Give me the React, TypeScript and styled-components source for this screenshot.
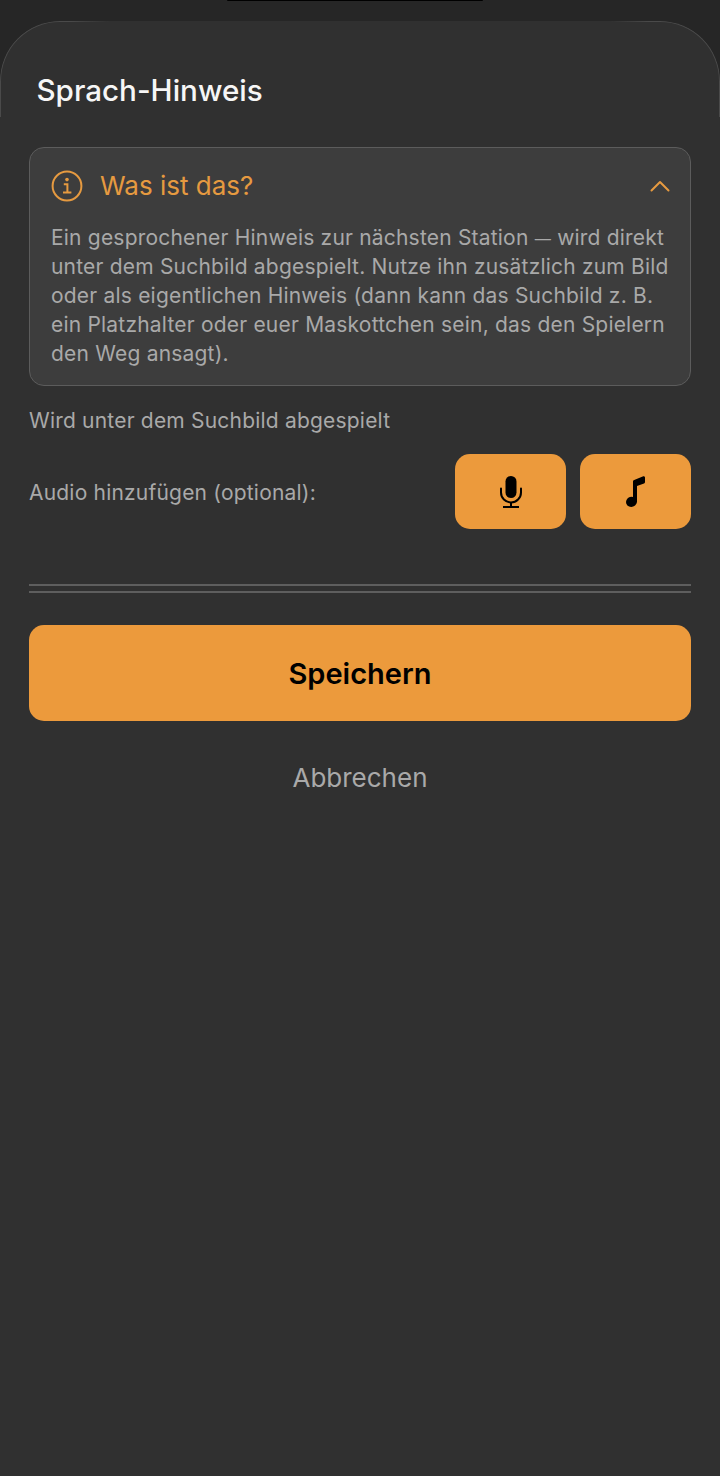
import React from "react";
import styled, { createGlobalStyle } from "styled-components";

const Global = createGlobalStyle`
  html, body { margin: 0; padding: 0; background: #252525; }
  * { box-sizing: border-box; }
  body { font-family: Inter, "Liberation Sans", sans-serif; }
`;

const Screen = styled.div`
  width: 720px;
  height: 1476px;
  overflow: hidden;
  background: #262626;
  display: flex;
  flex-direction: column;
  align-items: center;
`;

const Notch = styled.div`
  width: 256px;
  height: 1px;
  margin-right: 10px;
  flex: none;
  background: #000;
  border-radius: 0 0 4px 4px;
`;

const Sheet = styled.main`
  position: relative;
  width: 720px;
  flex: 1;
  margin-top: 20px;
  padding: 49px 29px 0;
  background: #303030;
  border-radius: 60px 60px 0 0;

  &::before {
    content: "";
    position: absolute;
    inset: 0 0 auto 0;
    height: 95px;
    border: 1px solid #4a4a4a;
    border-bottom: 0;
    border-radius: 60px 60px 0 0;
    pointer-events: none;
    -webkit-mask-image: linear-gradient(90deg, #000 0, #000 70px, transparent 110px, transparent 610px, #000 650px, #000 100%);
    mask-image: linear-gradient(90deg, #000 0, #000 70px, transparent 110px, transparent 610px, #000 650px, #000 100%);
  }
`;

const Title = styled.h1`
  margin: 0 0 36px 7.5px;
  height: 41px;
  font-size: 29.6px;
  line-height: 41px;
  font-weight: 500;
  letter-spacing: 0;
  color: #f6f6f6;
`;

const InfoCard = styled.section`
  height: 239px;
  border: 1.5px solid #5c5c5c;
  border-radius: 15px;
  background: #3d3d3d;
  padding: 20px 20px 0 21px;
`;

const InfoHead = styled.div`
  display: flex;
  align-items: center;
  height: 36px;
  color: #e69a40;
`;

const InfoTitle = styled.span`
  margin-left: 17px;
  flex: 1;
  font-size: 26px;
  font-weight: 400;
  line-height: 36px;
`;

const InfoText = styled.p`
  margin: 19.5px 0 0;
  font-size: 21px;
  letter-spacing: 0.2px;
  line-height: 28.8px;
  color: #a9a9a9;
  white-space: nowrap;
`;

const Dash = styled.span`
  font-size: 16.2px;
`;

const Note = styled.p`
  margin: 20px 0 0;
  height: 29px;
  font-size: 21px;
  letter-spacing: 0.2px;
  line-height: 29px;
  color: #a9a9a9;
`;

const AudioRow = styled.div`
  margin-top: 19px;
  display: flex;
  align-items: center;
  gap: 14px;
`;

const AudioLabel = styled.span`
  flex: 1;
  padding-top: 1px;
  font-size: 21px;
  letter-spacing: 0.2px;
  line-height: 29px;
  color: #a9a9a9;
`;

const IconButton = styled.button`
  width: 111px;
  height: 75px;
  border: 0;
  border-radius: 15px;
  background: #ec9a3c;
  display: flex;
  align-items: center;
  justify-content: center;
  color: #000;
  padding: 0;
`;

const Rule = styled.hr`
  margin: 0;
  border: 0;
  height: 2px;
  background: #5e5e5e;
`;

const Rules = styled.div`
  margin-top: 55px;
  display: flex;
  flex-direction: column;
  gap: 5px;
`;

const SaveButton = styled.button`
  display: block;
  margin-top: 32px;
  width: 100%;
  height: 96px;
  border: 0;
  border-radius: 15px;
  background: #ec9a3c;
  color: #000;
  font-family: inherit;
  font-size: 29px;
  font-weight: 600;
`;

const CancelButton = styled.button`
  display: block;
  margin-top: 36px;
  width: 100%;
  height: 40px;
  border: 0;
  background: transparent;
  color: #a9a9a9;
  font-family: inherit;
  font-size: 26px;
  font-weight: 400;
  padding: 0;
`;

const lines = [
  "unter dem Suchbild abgespielt. Nutze ihn zusätzlich zum Bild",
  "oder als eigentlichen Hinweis (dann kann das Suchbild z. B.",
  "ein Platzhalter oder euer Maskottchen sein, das den Spielern",
  "den Weg ansagt).",
];

const InfoIcon = () => (
  <svg width="32" height="32" viewBox="0 0 32 32" fill="none" stroke="currentColor">
    <circle cx="16" cy="16" r="14.4" strokeWidth="2" />
    <circle cx="16" cy="9.6" r="1.8" fill="currentColor" stroke="none" />
    <path d="M12.8 14.2h3.6v8.2M12 22.6h8.4" strokeWidth="2" />
  </svg>
);

const Chevron = () => (
  <svg width="20" height="12" viewBox="0 0 20 12" fill="none" stroke="currentColor" strokeWidth="2" strokeLinecap="round" strokeLinejoin="round">
    <path d="M1.5 10.5 10 2l8.5 8.5" />
  </svg>
);

const MicIcon = () => (
  <svg width="22" height="32" viewBox="0 0 22 32" fill="none" stroke="#000">
    <rect x="5.5" y="0" width="11" height="22" rx="5.5" fill="#000" stroke="none" />
    <path d="M1 12.5v4a10 10 0 0 0 20 0v-4" strokeWidth="2" strokeLinecap="round" />
    <path d="M11 26.5v4M3 31h16" strokeWidth="2" />
  </svg>
);

const NoteIcon = () => (
  <svg width="19" height="31" viewBox="0 0 19 31" fill="#000">
    <ellipse cx="5.5" cy="25.8" rx="5.5" ry="5" transform="rotate(-20 5.5 25.8)" />
    <path d="M7 26V5.5c0-.8.5-1.3 1.2-1.5L17.3.3c.9-.2 1.7.4 1.7 1.3V6c0 .7-.4 1.2-1 1.4L11 10v16z" />
  </svg>
);

export default function App() {
  return (
    <>
      <Global />
      <Screen>
        <Notch />
        <Sheet>
          <Title>Sprach-Hinweis</Title>
          <InfoCard>
            <InfoHead>
              <InfoIcon />
              <InfoTitle>Was ist das?</InfoTitle>
              <Chevron />
            </InfoHead>
            <InfoText>
              Ein gesprochener Hinweis zur nächsten Station <Dash>—</Dash> wird direkt
              <br />
              {lines.map((l) => (
                <React.Fragment key={l}>
                  {l}
                  <br />
                </React.Fragment>
              ))}
            </InfoText>
          </InfoCard>
          <Note>Wird unter dem Suchbild abgespielt</Note>
          <AudioRow>
            <AudioLabel>Audio hinzufügen (optional):</AudioLabel>
            <IconButton aria-label="Aufnehmen"><MicIcon /></IconButton>
            <IconButton aria-label="Musik"><NoteIcon /></IconButton>
          </AudioRow>
          <Rules>
            <Rule />
            <Rule />
          </Rules>
          <SaveButton>Speichern</SaveButton>
          <CancelButton>Abbrechen</CancelButton>
        </Sheet>
      </Screen>
    </>
  );
}
